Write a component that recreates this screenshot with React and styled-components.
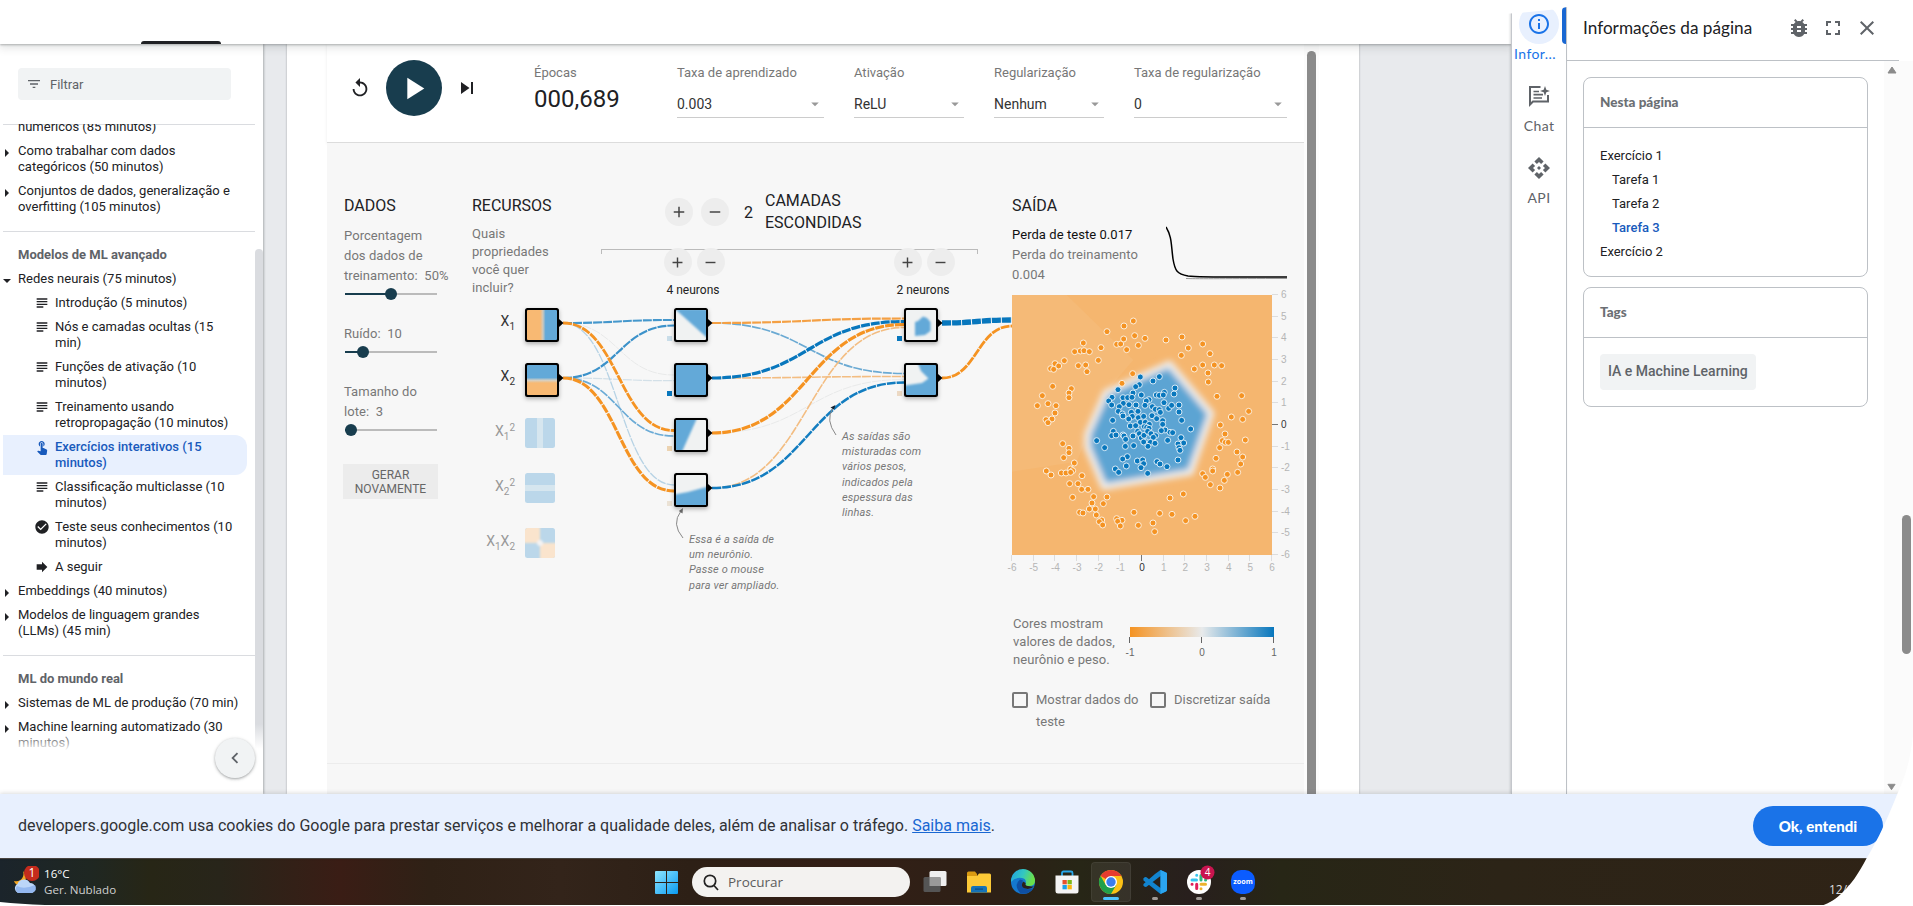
import React from 'react';
import styled, { createGlobalStyle } from 'styled-components';
import {
  MdApi, MdArrowDropDown, MdBugReport, MdCheckCircle, MdChevronLeft, MdClose, MdFilterList,
  MdForward, MdFullscreen, MdInfoOutline, MdPlayArrow, MdReplay, MdSkipNext, MdSubject, MdTouchApp,
  MdAdd, MdRemove,
} from 'react-icons/md';

const Global = createGlobalStyle`
  * { box-sizing: border-box; }
  html, body { margin: 0; background: #fff; overflow: hidden; }
  body { font-family: Roboto, "Liberation Sans", sans-serif; color: #202124; }
  svg { display: block; flex: none; }
`;

const SANS = '"Lato", Roboto, sans-serif';

const Screen = styled.div`
  position: relative;
  width: 1913px;
  height: 906px;
  display: flex;
  flex-direction: column;
  overflow: hidden;
  background: #fff;
`;
const Upper = styled.div`
  height: 794px;
  display: flex;
`;
const Site = styled.div`
  width: 1511px;
  display: flex;
  flex-direction: column;
`;
const TopBar = styled.header`
  height: 44px;
  flex: none;
  padding-left: 141px;
  display: flex;
  align-items: flex-end;
  background: #fff;
  box-shadow: 0 1px 2px rgba(60, 64, 67, 0.35), 0 3px 8px 1px rgba(60, 64, 67, 0.15);
  z-index: 2;
`;
const ActiveTab = styled.div`
  width: 80px;
  height: 3px;
  border-radius: 3px 3px 0 0;
  background: #202124;
`;
const Body = styled.div`
  flex: 1;
  min-height: 0;
  display: flex;
  background: #e8eaed;
`;

/* ---- Course navigation ---- */
const Sidebar = styled.nav`
  position: relative;
  width: 263px;
  height: 750px;
  background: #fff;
  display: flex;
  flex-direction: column;
  box-shadow: 1px 0 2px rgba(60, 64, 67, 0.35);
`;
const FilterBox = styled.div`
  margin: 24px 0 24px 18px;
  width: 213px;
  height: 32px;
  flex: none;
  border-radius: 4px;
  background: #f1f3f4;
  color: #5f6368;
  display: flex;
  align-items: center;
  gap: 8px;
  padding: 0 8px;
  font-size: 13px;
`;
const NavScroll = styled.div`
  position: relative;
  margin-left: 3px;
  height: 627px;
  overflow: hidden;
  width: 260px;
  &::after {
    content: '';
    position: absolute;
    left: 0;
    right: 0;
    bottom: 0;
    height: 20px;
    background: linear-gradient(rgba(255, 255, 255, 0), #fff);
  }
`;
const NavSection = styled.div`
  width: 252px;
  border-top: 1px solid #dadce0;
  padding: ${(p) => (p.$first ? '0 0 12px' : '7px 0 12px')};
`;
const NavLift = styled.div`
  margin-top: -10px;
`;
const NavHeading = styled.div`
  margin: 8px 0 4px 15px;
  font-size: 13px;
  line-height: 16px;
  font-weight: 700;
  color: #5f6368;
`;
const NavItem = styled.a`
  display: flex;
  font-size: 13px;
  line-height: 16px;
  padding: 4px 0;
  color: ${(p) => (p.$on ? '#185abc' : '#202124')};
  font-weight: ${(p) => (p.$on ? 500 : 400)};
  background: ${(p) => (p.$on ? '#e8f0fe' : 'transparent')};
  width: ${(p) => (p.$on ? '244px' : 'auto')};
  border-radius: 0 12px 12px 0;
  white-space: pre-line;
`;
const Marker = styled.span`
  width: ${(p) => (p.$sub ? '52px' : '15px')};
  flex: none;
  padding-left: ${(p) => (p.$sub ? '31px' : '0')};
  svg { margin-top: ${(p) => (p.$sub ? '0' : '4px')}; }
`;
const NavThumb = styled.div`
  position: absolute;
  right: 0;
  top: 205px;
  width: 8px;
  height: 500px;
  border-radius: 4px 4px 0 0;
  background: linear-gradient(#dadce0 95%, rgba(218, 220, 224, 0));
`;
const Collapse = styled.button`
  position: absolute;
  left: 215px;
  top: 694px;
  width: 40px;
  height: 40px;
  padding: 0;
  border: 0;
  border-radius: 50%;
  background: #f1f3f4;
  color: #5f6368;
  display: grid;
  place-items: center;
  box-shadow: 0 1px 2px rgba(60, 64, 67, 0.3), 0 1px 3px 1px rgba(60, 64, 67, 0.15);
`;

/* ---- Article and playground ---- */
const Article = styled.main`
  width: 1072px;
  margin-left: 24px;
  padding-left: 40px;
  background: #fff;
  display: flex;
  box-shadow: 0 0 2px rgba(60, 64, 67, 0.4);
`;
const Playground = styled.section`
  width: 977px;
  display: flex;
  flex-direction: column;
`;
const FrameScroll = styled.div`
  width: 15px;
  padding: 7px 3px 0;
  background: #fcfcfc;
`;
const FrameThumb = styled.div`
  width: 9px;
  height: 100%;
  border-radius: 5px 5px 0 0;
  background: #8b8b8b;
`;
const Controls = styled.div`
  height: 99px;
  flex: none;
  display: flex;
  align-items: flex-start;
  background: #fff;
  border-bottom: 1px solid #dcdcdc;
  box-shadow: 0 1px 3px rgba(0, 0, 0, 0.08);
`;
const PlayGroup = styled.div`
  width: 207px;
  flex: none;
  height: 88px;
  padding-left: 22px;
  display: flex;
  align-items: center;
  color: #202124;
`;
const PlayButton = styled.div`
  width: 56px;
  height: 56px;
  margin: 0 13px 0 15px;
  padding-right: 2px;
  border-radius: 50%;
  background: #183d4e;
  color: #fff;
  display: grid;
  place-items: center;
`;
const Epochs = styled.div`
  width: 143px;
  flex: none;
  padding-top: 19px;
`;
const Label = styled.div`
  font-size: 13px;
  line-height: 20px;
  color: #777;
  white-space: nowrap;
`;
const EpochValue = styled.div`
  font-size: 24px;
  line-height: 30px;
  margin-top: 1px;
  color: #202124;
`;
const Field = styled.div`
  width: ${(p) => p.$w}px;
  flex: none;
  margin-right: 30px;
  padding-top: 19px;
  &:last-child { margin-right: 0; }
`;
const Select = styled.div`
  display: flex;
  justify-content: space-between;
  align-items: center;
  height: 28px;
  margin-top: 7px;
  padding-bottom: 0;
  border-bottom: 1px solid #ccc;
  font-size: 14px;
  color: #333;
  svg { color: #999; }
`;
const Model = styled.div`
  flex: 1;
  min-height: 0;
  background: #f7f7f7;
`;
const Columns = styled.div`
  height: 621px;
  padding: 53px 0 0 17px;
  display: grid;
  grid-template-columns: 128px 540px 292px;
  border-bottom: 1px solid #ececec;
`;
const Heading = styled.h4`
  margin: 0;
  font-size: 16px;
  line-height: ${(p) => p.$lh || 20}px;
  font-weight: 400;
  color: #202124;
`;
const Para = styled.div`
  font-size: 13px;
  line-height: ${(p) => p.$lh || 20}px;
  margin-top: ${(p) => p.$mt || 0}px;
  letter-spacing: 0.06px;
  color: ${(p) => (p.$dark ? '#111' : '#777')};
  white-space: pre;
`;
const Track = styled.div`
  position: relative;
  width: 92px;
  height: 2px;
  margin: ${(p) => p.$mt}px 0 5px 1px;
  background: linear-gradient(90deg, #183d4e ${(p) => p.$at}px, #bbb ${(p) => p.$at}px);
`;
const Knob = styled.div`
  position: absolute;
  top: -5px;
  left: ${(p) => p.$at - 6}px;
  width: 12px;
  height: 12px;
  border-radius: 50%;
  background: #183d4e;
`;
const Regenerate = styled.button`
  margin: 28px 0 0 -1px;
  width: 95px;
  height: 35px;
  padding: 0;
  border: 0;
  background: #ececec;
  color: #666;
  font: 12px/14px Roboto, sans-serif;
`;
const NetHead = styled.div`
  display: flex;
  height: 104px;
`;
const Features = styled.div`
  width: 129px;
`;
const Hidden = styled.div`
  width: 377px;
`;
const LayerRow = styled.div`
  height: 53px;
  padding: 0 0 21px 64px;
  display: flex;
  align-items: center;
  gap: 8px;
`;
const Round = styled.span`
  width: 28px;
  height: 28px;
  flex: none;
  border-radius: 50%;
  background: #ededed;
  color: #444;
  display: grid;
  place-items: center;
`;
const Count = styled.span`
  width: 20px;
  margin-left: 7px;
  margin-right: -7px;
  font-size: 16px;
`;
const Bracket = styled.div`
  height: 5px;
  border: 1px solid #bbb;
  border-bottom: 0;
`;
const NeuronRow = styled.div`
  display: flex;
  gap: 130px;
  margin-top: -6px;
  padding-left: 43px;
`;
const NeuronGroup = styled.div`
  width: 100px;
  display: flex;
  flex-wrap: wrap;
  justify-content: center;
  column-gap: 5px;
  font-size: 12px;
  line-height: 20px;
  color: #222;
`;
const NeuronCount = styled.div`
  width: 100%;
  margin: 4px 2px 0 0;
  text-align: center;
`;
const Diagram = styled.div`
  position: relative;
  width: 540px;
  height: 300px;
`;
const Note = styled.div`
  position: absolute;
  left: ${(p) => p.$x}px;
  top: ${(p) => p.$y}px;
  font-size: 11px;
  line-height: 15.2px;
  font-style: italic;
  letter-spacing: 0.15px;
  color: #777;
  white-space: pre;
`;
const LossRow = styled.div`
  display: flex;
  margin-top: 9px;
  height: 63px;
`;
const LossText = styled.div`
  width: 154px;
`;
const LegendRow = styled.div`
  display: flex;
  align-items: flex-start;
  margin-top: 37px;
  svg { margin: 12px 0 0 0; }
`;
const LegendText = styled.div`
  width: 113px;
  padding-left: 1px;
`;
const Checks = styled.div`
  display: flex;
  margin-top: 20px;
`;
const Check = styled.label`
  width: 138px;
  display: flex;
  gap: 8px;
  font-size: 13px;
  line-height: 22px;
  color: #777;
  white-space: pre;
`;
const Box = styled.span`
  width: 16px;
  height: 16px;
  margin-top: 3px;
  flex: none;
  border: 2px solid #777;
  border-radius: 2px;
`;

/* ---- Right rail and info panel ---- */
const Rail = styled.aside`
  width: 56px;
  border-left: 1px solid #c4c7cc;
  border-right: 1px solid #bdc1c6;
  background: #fff;
  display: flex;
  flex-direction: column;
  align-items: center;
  position: relative;
  font-family: ${SANS};
  font-size: 14px;
  color: #5f6368;
  box-shadow: -1px 0 2px rgba(60, 64, 67, 0.2);
  z-index: 3;
`;
const RailIcon = styled.div`
  width: 40px;
  height: 40px;
  display: grid;
  place-items: center;
  border-radius: 50%;
  margin-top: ${(p) => p.$mt}px;
  background: ${(p) => (p.$on ? '#e8f0fe' : 'transparent')};
  color: ${(p) => (p.$on ? '#1a73e8' : '#5f6368')};
  clip-path: ${(p) => (p.$on ? 'polygon(0 9px, 100% 5px, 100% 100%, 0 100%)' : 'none')};
`;
const RailText = styled.div`
  line-height: 20px;
  color: ${(p) => (p.$on ? '#1a73e8' : '#5f6368')};
  letter-spacing: 0.4px;
  margin-right: ${(p) => (p.$on ? 8 : 0)}px;
`;
const RailBar = styled.div`
  position: absolute;
  right: 0;
  top: 7px;
  width: 4px;
  height: 37px;
  border-radius: 4px 0 0 4px;
  background: #1967d2;
`;
const Panel = styled.aside`
  width: 346px;
  display: flex;
  flex-direction: column;
`;
const PanelHead = styled.div`
  height: 61px;
  width: 332px;
  padding: 0 20px 5px 16px;
  display: flex;
  align-items: center;
  border-bottom: 1px solid #bdc1c6;
  color: #5f6368;
`;
const PanelTitle = styled.h2`
  margin: 0 auto 0 0;
  font: 400 17.2px/24px ${SANS};
  color: #202124;
`;
const Tool = styled.span`
  margin-left: 10px;
`;
const PanelBody = styled.div`
  flex: 1;
  display: flex;
`;
const Cards = styled.div`
  width: 317px;
  padding: 16px 16px 0;
  display: flex;
  flex-direction: column;
  gap: 10px;
`;
const Card = styled.section`
  height: ${(p) => p.$h}px;
  width: 285px;
  border: 1px solid #bdc1c6;
  border-radius: 8px;
`;
const CardTitle = styled.h3`
  margin: 0;
  height: 50px;
  padding-left: 16px;
  border-bottom: 1px solid #bdc1c6;
  font: 900 13.5px/49px ${SANS};
  color: #6b6f74;
`;
const TocItem = styled.a`
  display: block;
  padding-left: ${(p) => (p.$sub ? 28 : 16)}px;
  font-size: 13px;
  line-height: 24px;
  color: ${(p) => (p.$on ? '#185abc' : '#202124')};
  font-weight: ${(p) => (p.$on ? 500 : 400)};
  &:first-of-type { margin-top: 16px; }
`;
const Chip = styled.span`
  display: inline-block;
  margin: 16px;
  padding: 0 8px;
  height: 36px;
  border-radius: 4px;
  background: #f1f3f4;
  color: #5f6368;
  font-size: 14px;
  font-weight: 500;
  line-height: 35px;
`;
const PageScroll = styled.div`
  width: 29px;
  background: #fbfbfb;
  padding: 5px 3px 3px;
  display: flex;
  flex-direction: column;
`;
const PageThumb = styled.div`
  width: 9px;
  height: 139px;
  margin: 441px 0 auto 15px;
  border-radius: 5px;
  background: #8b8b8b;
`;

/* ---- Cookie notice and taskbar ---- */
const CookieBar = styled.div`
  height: 64px;
  padding: 0 30px 1px 18px;
  display: flex;
  align-items: center;
  justify-content: space-between;
  background: #e8f0fe;
  font-size: 16px;
  color: #303236;
  box-shadow: 0 -1px 4px rgba(60, 64, 67, 0.18);
  z-index: 4;
  a { color: #1967d2; text-decoration: underline; }
`;
const Accept = styled.button`
  width: 130px;
  height: 40px;
  border: 0;
  border-radius: 20px;
  background: #1a73e8;
  color: #fff;
  font: 900 15px/20px ${SANS};
`;
const Taskbar = styled.footer`
  position: relative;
  height: 47px;
  display: flex;
  align-items: flex-start;
  font-family: "Open Sans", sans-serif;
  border-top: 1px solid #4a4440;
  background: linear-gradient(90deg, #1b242b 0, #1f2722 90px, #272616 150px, #28251a 220px, #3a1d15 340px, #2f2116 430px, #33241a 560px, #2d2016 690px, #331f16 840px, #2d2016 1000px, #272616 1080px, #281f1d 1190px, #272616 1280px, #2c2417 1500px, #2f2316 1913px);
`;
const Weather = styled.div`
  width: 655px;
  padding: 7px 0 0 12px;
  display: flex;
  gap: 5px;
  font-size: 11.6px;
  line-height: 16px;
  color: #fff;
  small { display: block; font-size: 11.6px; color: #cfcfcf; }
`;
const WinIcon = styled.div`
  padding-top: 12px;
  width: 37px;
`;
const Search = styled.div`
  width: 218px;
  height: 30px;
  margin-top: 8px;
  border-radius: 15px;
  background: #f3f2f0;
  color: #5c5c5c;
  display: flex;
  align-items: center;
  gap: 9px;
  padding-left: 11px;
  font-size: 13.5px;
`;
const Apps = styled.div`
  display: flex;
  padding: 3px 0 0 5px;
  gap: 4px;
`;
const AppTile = styled.div`
  width: 40px;
  height: 40px;
  border-radius: 4px;
  padding: 8px 8px 0 7px;
  display: flex;
  flex-direction: column;
  align-items: center;
  gap: 3px;
  background: ${(p) => (p.$on ? 'rgba(255,255,255,0.07)' : 'transparent')};
  box-shadow: ${(p) => (p.$on ? 'inset 0 0 0 1px rgba(255,255,255,0.06)' : 'none')};
  svg { overflow: visible; }
  &::after {
    content: '';
    width: ${(p) => (p.$on ? 16 : p.$run ? 6 : 0)}px;
    height: 3px;
    border-radius: 2px;
    background: ${(p) => (p.$on ? '#4cc2ff' : '#a09a96')};
  }
`;
const DateText = styled.div`
  position: absolute;
  left: 1829px;
  top: 23px;
  font-size: 12px;
  line-height: 16px;
  color: #ddd;
`;
const Cutout = styled.svg`
  position: absolute;
  left: 0;
  top: 0;
  pointer-events: none;
  z-index: 6;
`;

const ORANGE = '#f59322';
const BLUE = '#0877bd';
const LO = '#f8b973';
const LB = '#63a9d8';
const LW = '#f0f2f2';

const ORANGE_PTS = [[400,123],[372,138],[321,155],[404,167],[435,175],[371,177],[350,193],[362,192],[415,196],[380,209],[498,180],[546,171],[608,192],[565,204],[544,226],[630,221],[608,255],[583,267],[643,255],[665,257],[624,279],[625,306],[250,189],[303,203],[224,215],[241,213],[252,212],[268,215],[193,242],[295,241],[165,251],[176,258],[152,266],[161,268],[235,257],[257,255],[261,275],[398,281],[366,310],[158,319],[214,326],[207,339],[207,353],[127,347],[112,377],[144,371],[168,377],[165,399],[138,419],[156,417],[144,428],[651,349],[725,347],[746,394],[694,411],[728,418],[661,435],[675,462],[736,480],[667,482],[676,487],[685,487],[659,503],[711,516],[728,531],[648,535],[722,552],[638,567],[638,573],[713,577],[682,583],[608,581],[616,592],[673,601],[631,614],[660,624],[188,491],[207,505],[207,518],[191,533],[223,549],[139,573],[153,585],[184,579],[198,579],[212,567],[218,572],[212,577],[246,587],[209,611],[234,611],[245,628],[264,628],[218,652],[281,650],[321,651],[276,669],[310,671],[268,687],[286,687],[239,697],[249,699],[289,705],[305,720],[298,725],[308,735],[402,697],[350,716],[366,721],[353,724],[361,738],[415,736],[479,700],[516,703],[585,709],[557,722],[459,729],[464,755],[510,654],[550,642]];
const BLUE_PTS = [[421,291],[478,290],[459,303],[418,314],[407,320],[354,329],[525,324],[493,337],[522,342],[424,345],[469,345],[478,346],[399,339],[490,345],[336,352],[326,363],[369,353],[383,353],[396,352],[447,359],[439,363],[335,375],[370,370],[387,374],[358,380],[355,394],[408,375],[435,376],[492,368],[506,385],[515,376],[537,375],[537,396],[457,380],[466,388],[478,389],[481,397],[367,402],[369,408],[394,397],[414,394],[397,409],[386,417],[338,421],[415,413],[431,409],[456,407],[470,416],[488,422],[488,433],[545,421],[572,447],[421,427],[436,427],[391,438],[407,437],[448,433],[433,440],[440,442],[447,445],[495,450],[484,452],[510,457],[518,458],[340,454],[335,467],[348,465],[369,465],[372,468],[377,478],[399,468],[413,454],[418,461],[424,474],[432,466],[443,454],[453,461],[467,467],[460,472],[437,485],[431,486],[451,487],[465,490],[444,499],[503,481],[543,473],[551,489],[534,492],[537,503],[540,511],[290,482],[314,503],[376,499],[401,497],[382,530],[368,537],[412,543],[428,540],[431,551],[379,558],[423,563],[471,545],[480,552],[501,560],[534,540],[346,567],[356,577],[443,580]];

const HeatSvg = styled.svg`
  overflow: visible;
`;

const Heat = () => {
  const ticks = [-6, -5, -4, -3, -2, -1, 0, 1, 2, 3, 4, 5, 6];
  return (
    <HeatSvg width="292" height="290" viewBox="0 -7 292 290" fontFamily="Liberation Sans, sans-serif" fontSize="10">
      <defs>
        <filter id="soft" x="-20%" y="-20%" width="140%" height="140%"><feGaussianBlur stdDeviation="9" /></filter>
        <clipPath id="plot"><rect width="260" height="260" /></clipPath>
      </defs>
      <g clipPath="url(#plot)">
        <rect width="260" height="260" fill="#f5b66f" />
        <g transform="scale(0.33333) translate(-36 -45)">
          <path d="M36 45H200L400 240L318 335L230 545L36 575Z" fill="#f5ba77" />
          <path d="M508 252L633 400L571 577L312 620L262 500L263 462L318 338Z" fill="#5ca4d3" stroke="#eeeceb" strokeWidth="20" strokeLinejoin="round" filter="url(#soft)" />
          {ORANGE_PTS.map(([x, y], i) => <circle key={i} cx={x} cy={y} r="9" fill={ORANGE} stroke="#fbeedd" strokeWidth="3" />)}
          {BLUE_PTS.map(([x, y], i) => <circle key={i} cx={x} cy={y} r="9" fill={BLUE} stroke="#d9eaf5" strokeWidth="3" />)}
        </g>
      </g>
      {ticks.map((t) => {
        const p = (t + 6) * 21.667;
        const line = t === 0 ? '#777' : '#ddd';
        const ink = t === 0 ? '#333' : '#b5b5b5';
        const x = Math.round(p) - 0.5;
        const y = Math.round(260 - p) - 0.5;
        return (
          <g key={t}>
            <path d={`M${x} 260v6`} stroke={line} />
            <text x={p} y="276" textAnchor="middle" fill={ink}>{t}</text>
            <path d={`M260 ${y}h6`} stroke={line} />
            <text x="269" y={263 - p} fill={ink}>{t}</text>
          </g>
        );
      })}
    </HeatSvg>
  );
};

/* Link: [x0, y0, x1, y1, colour, width] in diagram space */
const LINKS = [
  [91, 23, 202, 75, '#e6e8e8', 0.9], [91, 78, 202, 80.7, '#d3e0e8', 1.2],
  [91, 23, 202, 185, '#b7d3e5', 1.3], [91, 23, 202, 20, '#4497cc', 2.1],
  [91, 78, 202, 25.5, '#3c92ca', 2.2], [91, 78, 202, 136, '#6babd6', 1.7],
  [91, 23, 202, 130.5, ORANGE, 2.8], [91, 78, 202, 191, ORANGE, 3.1],
  [240, 133, 432, 79.5, '#e6e8e8', 0.9], [240, 23, 432, 73.5, '#6baad3', 1.7],
  [240, 78, 432, 76.5, '#f3bd82', 1.6], [240, 188, 432, 27.5, '#f3bd82', 1.6],
  [240, 23, 432, 18.5, '#f4a044', 2.2], [240, 78, 432, 21.5, BLUE, 3.2],
  [240, 133, 432, 24.5, ORANGE, 3.2], [240, 188, 432, 82.5, '#137dc0', 2.5],
  [470, 23, 540, 20, BLUE, 5.3], [470, 78, 540, 26, ORANGE, 2.8],
];

const Node = ({ x, y, bg, children, off, blur = true }) => (
  <g transform={`translate(${x} ${y})`} opacity={off ? 0.4 : 1}>
    {!off && <path d="M34 11L38.5 15L34 19Z" fill="#000" />}
    {!off && <rect x="0" y="0" width="34" height="34" rx="2.5" fill="#000" filter="url(#drop)" />}
    <g transform={off ? 'translate(-2 -2)' : undefined} clipPath={off ? 'url(#roundTile)' : 'url(#tile)'}>
      <rect x="2" y="2" width="30" height="30" fill={bg} />
      <g filter={blur ? 'url(#fuzz)' : undefined}>{children}</g>
    </g>
  </g>
);

const FeatureLabel = ({ y, a, b, sup, off }) => (
  <text x="43" y={y} textAnchor="end" fontSize="14" fill={off ? '#999' : '#333'}>
    X<tspan fontSize="10" dy="4">{a}</tspan>
    {sup && <tspan fontSize="10" dy="-9">2</tspan>}
    {b && <tspan fontSize="14" dy="-4">X</tspan>}
    {b && <tspan fontSize="10" dy="4">{b}</tspan>}
  </text>
);

const Network = () => (
  <svg width="540" height="300" viewBox="0 0 540 300" fontFamily="Roboto, sans-serif">
    <defs>
      <filter id="fuzz" x="-20%" y="-20%" width="140%" height="140%"><feGaussianBlur stdDeviation="0.9" /></filter>
      <filter id="drop" x="-30%" y="-30%" width="170%" height="170%"><feDropShadow dx="0" dy="2" stdDeviation="2" floodOpacity="0.3" /></filter>
      <clipPath id="tile"><rect x="2" y="2" width="30" height="30" rx="1" /></clipPath>
      <clipPath id="roundTile"><rect x="2" y="2" width="30" height="30" rx="2.5" /></clipPath>
      <linearGradient id="vx"><stop offset="0.44" stopColor={LO} /><stop offset="0.53" stopColor="#cfc9bd" /><stop offset="0.62" stopColor={LB} /></linearGradient>
      <linearGradient id="vy" x2="0" y2="1"><stop offset="0.42" stopColor={LB} /><stop offset="0.51" stopColor="#d6d0c4" /><stop offset="0.6" stopColor={LO} /></linearGradient>
    </defs>
    <g fill="none" strokeDasharray="9 1">
      {LINKS.map(([x0, y0, x1, y1, c, w], i) => {
        const m = (x0 + x1) / 2;
        return <path key={i} d={`M${x0} ${y0}C${m} ${y0} ${m} ${y1} ${x1} ${y1}`} stroke={c} strokeWidth={w} />;
      })}
    </g>
    <FeatureLabel y={26} a="1" />
    <FeatureLabel y={81} a="2" />
    <FeatureLabel y={136} a="1" sup off />
    <FeatureLabel y={191} a="2" sup off />
    <FeatureLabel y={246} a="1" b="2" off />
    <Node x={53} y={8} bg="url(#vx)" />
    <Node x={53} y={63} bg="url(#vy)" />
    <Node x={53} y={118} bg={LB} off blur={false}><rect x="14" y="2" width="6" height="30" fill="#a7cde4" /></Node>
    <Node x={53} y={173} bg={LB} off blur={false}><rect x="2" y="14" width="30" height="6" fill="#a7cde4" /></Node>
    <Node x={53} y={228} bg={LB} off>
      <rect x="-2" y="-2" width="19" height="19" fill="#ffc98f" /><rect x="17" y="17" width="20" height="20" fill="#ffc98f" />
      <circle cx="17" cy="17" r="3" fill="#eee" />
    </Node>
    <rect x="195" y="36" width="5" height="5" fill="#c9dde9" />
    <rect x="195" y="91" width="5" height="5" fill={BLUE} />
    <rect x="195" y="146" width="5" height="5" fill="#ecd3b1" />
    <rect x="195" y="201" width="5" height="5" fill="#ebe2d5" />
    <rect x="425" y="36" width="5" height="5" fill={BLUE} />
    <rect x="425" y="91" width="5" height="5" fill="#ecd9c4" />
    <Node x={202} y={8} bg={LW}><path d="M1 1H40V36Z" fill={LB} /></Node>
    <Node x={202} y={63} bg={LB} />
    <Node x={202} y={118} bg={LW}><path d="M-2 -2H24L7 36H-2Z" fill={LB} /></Node>
    <Node x={202} y={173} bg={LW}><path d="M-2 22L14 19L36 13V36H-2Z" fill={LB} /></Node>
    <Node x={432} y={8} bg={LW}><path d="M11 14L14 13L19 8.500L23 10L26.500 14V23L21 27L11 28Z" fill={LB} /></Node>
    <Node x={432} y={63} bg={LB}><path d="M-2 -2H13L17 8L24.500 15.500L18 20L-2 23Z" fill={LW} /></Node>
    <g fill="none" stroke="#888">
      <path d="M211 238Q199 224 209 211" />
      <path d="M364 135Q353 120 361 108" />
    </g>
    <path d="M211 208L210.500 213.500L206.800 211Z" fill="#666" />
    <path d="M363.500 105L362 109.500L358.500 107.500Z" fill="#123" />
  </svg>
);

const NAV = [
  { items: [
    { t: 'numéricos (85 minutos)' },
    { m: 'r', t: 'Como trabalhar com dados\ncategóricos (50 minutos)' },
    { m: 'r', t: 'Conjuntos de dados, generalização e\noverfitting (105 minutos)' },
  ] },
  { h: 'Modelos de ML avançado', items: [
    { m: 'd', t: 'Redes neurais (75 minutos)' },
    { s: MdSubject, t: 'Introdução (5 minutos)' },
    { s: MdSubject, t: 'Nós e camadas ocultas (15\nmin)' },
    { s: MdSubject, t: 'Funções de ativação (10\nminutos)' },
    { s: MdSubject, t: 'Treinamento usando\nretropropagação (10 minutos)' },
    { s: MdTouchApp, t: 'Exercícios interativos (15\nminutos)', on: true },
    { s: MdSubject, t: 'Classificação multiclasse (10\nminutos)' },
    { s: MdCheckCircle, t: 'Teste seus conhecimentos (10\nminutos)' },
    { s: MdForward, t: 'A seguir' },
    { m: 'r', t: 'Embeddings (40 minutos)' },
    { m: 'r', t: 'Modelos de linguagem grandes\n(LLMs) (45 min)' },
  ] },
  { h: 'ML do mundo real', items: [
    { m: 'r', t: 'Sistemas de ML de produção (70 min)' },
    { m: 'r', t: 'Machine learning automatizado (30\nminutos)' },
  ] },
];

const Arrow = ({ down }) => (
  <svg width="8" height="10" viewBox="0 0 8 10"><path d={down ? 'M0 4H8L4 8Z' : 'M2 2L6 6L2 10Z'} fill="#202124" /></svg>
);

const NavList = () => (
  <NavScroll>
    {NAV.map((sec, i) => (
      <NavSection key={i} $first={i === 0}>
        {i === 0 && <NavLift />}
        {sec.h && <NavHeading>{sec.h}</NavHeading>}
        {sec.items.map((it) => (
          <NavItem key={it.t} $on={it.on}>
            <Marker $sub={!!it.s}>{it.s ? <it.s size={16} /> : it.m ? <Arrow down={it.m === 'd'} /> : null}</Marker>
            {it.t}
          </NavItem>
        ))}
      </NavSection>
    ))}
  </NavScroll>
);

const Slider = ({ at, mt }) => <Track $at={at} $mt={mt}><Knob $at={at} /></Track>;

const SelectField = ({ label, value, w }) => (
  <Field $w={w}>
    <Label>{label}</Label>
    <Select>{value}<MdArrowDropDown size={18} /></Select>
  </Field>
);

const Neurons = ({ n }) => (
  <NeuronGroup>
    <Round><MdAdd size={17} /></Round>
    <Round><MdRemove size={17} /></Round>
    <NeuronCount>{n} neurons</NeuronCount>
  </NeuronGroup>
);

const ChatSpark = () => (
  <svg width="24" height="24" viewBox="0 0 24 24" fill="none" stroke="#5f6368" strokeWidth="2">
    <path d="M13.500 3H3V20.500L6 17.500H21V11" />
    <path d="M6.500 7.500H12M6.500 10.700H16M6.500 14H15" strokeWidth="1.700" />
    <path d="M18 2L19.300 5.700L23 7L19.300 8.300L18 12L16.700 8.300L13 7L16.700 5.700Z" fill="#5f6368" stroke="none" />
  </svg>
);

const WeatherIcon = () => (
  <svg width="27" height="30" viewBox="0 0 27 30">
    <path d="M11 5C13 10 9 17 2 15C3 19 8 21 12 18C15 14 14 8 11 5Z" fill="#f6a821" />
    <path d="M6 27A5 5 0 0 1 5.500 18A7 7 0 0 1 18 17A5.200 5.200 0 0 1 20 27Z" fill="#bcd6f8" />
    <path d="M6 27A4.500 4.500 0 0 1 5 20Q12 24 23 19Q26 24 20 27Z" fill="#94b8ef" />
    <circle cx="20" cy="7" r="8" fill="#c42b1c" />
    <text x="20" y="11.300" textAnchor="middle" fontSize="12" fill="#fff" fontFamily="Open Sans, sans-serif">1</text>
  </svg>
);
const Windows = () => (
  <svg width="23" height="23" viewBox="0 0 23 23">
    <defs><linearGradient id="w" x2="1" y2="1"><stop stopColor="#8fe6ff" /><stop offset="1" stopColor="#0a9bf2" /></linearGradient></defs>
    <path d="M0 1Q0 0 1 0H11V11H0ZM12 0H22Q23 0 23 1V11H12ZM0 12H11V23H1Q0 23 0 22ZM12 12H23V22Q23 23 22 23H12Z" fill="url(#w)" />
  </svg>
);
const Magnifier = () => (
  <svg width="16" height="17" viewBox="0 0 16 17" fill="none" stroke="#222" strokeWidth="1.700">
    <circle cx="7" cy="7" r="5.700" /><path d="M11 11.500L15 16" />
  </svg>
);
const TaskView = () => (
  <svg width="24" height="24" viewBox="0 0 24 24">
    <rect x="6.500" y="1" width="17" height="15" rx="1.500" fill="#efefef" />
    <rect x="0.500" y="7" width="17" height="15" rx="1.500" fill="#555" />
    <rect x="6.500" y="7" width="11" height="9" fill="#9a9a9a" />
  </svg>
);
const Explorer = () => (
  <svg width="24" height="24" viewBox="0 0 24 24">
    <path d="M0 3Q0 1.500 1.500 1.500H8L10 4V8H0Z" fill="#d99a12" />
    <path d="M0 6H10L12 3.500H22.500Q24 3.500 24 5V22.500H0Z" fill="#fcc937" />
    <path d="M4 22.500V18Q4 16 6 16H18Q20 16 20 18V22.500Z" fill="#1573b8" />
    <rect x="8" y="18.500" width="8" height="1.200" fill="#0b4c83" />
  </svg>
);
const Edge = () => (
  <svg width="24" height="24" viewBox="0 0 24 24">
    <defs><linearGradient id="e" x2="1" y2="0.300"><stop stopColor="#1ea0e6" /><stop offset="0.550" stopColor="#33c7c0" /><stop offset="1" stopColor="#6be04a" /></linearGradient></defs>
    <circle cx="12" cy="12" r="12" fill="#1478cf" />
    <path d="M0 11A12 12 0 0 1 24 11Q24 16 18 16Q14 16 14.500 14Q16 9 11 8Q4 7 0 12Z" fill="url(#e)" />
    <path d="M9 9.500Q2 15 9.500 23.500Q18 25 22.500 18Q15 21 12 17Q10 14 12 10.500Z" fill="#0f4fa3" />
    <path d="M12 11.500Q9 17 14 18.500Q19 20 23 16.500Q20 16.500 17 16Q13.500 15.500 14.700 13Z" fill="#2a2018" />
  </svg>
);
const Store = () => (
  <svg width="24" height="24" viewBox="0 0 24 24">
    <path d="M7 6V3Q7 1.500 8.500 1.500H16Q17.500 1.500 17.500 3V6" fill="none" stroke="#28a8ea" strokeWidth="1.800" />
    <path d="M0.500 5.500H23.500V21Q23.500 23.500 21 23.500H3Q0.500 23.500 0.500 21Z" fill="#f4f4f4" />
    <rect x="7.500" y="10" width="4.300" height="4.300" fill="#e9502b" /><rect x="12.500" y="10" width="4.300" height="4.300" fill="#7cb815" />
    <rect x="7.500" y="15" width="4.300" height="4.300" fill="#1ba0e8" /><rect x="12.500" y="15" width="4.300" height="4.300" fill="#fbb60d" />
  </svg>
);
const Chrome = () => (
  <svg width="24" height="24" viewBox="0 0 24 24">
    <circle cx="12" cy="12" r="12" fill="#fbc116" />
    <path d="M12 12L1.600 6A12 12 0 0 1 22.400 6H12Z" fill="#e63b2e" />
    <path d="M1.600 6A12 12 0 0 0 12 24L17.200 15H12L6.800 15Z" fill="#21a04a" />
    <circle cx="12" cy="12" r="6" fill="#fff" /><circle cx="12" cy="12" r="4.700" fill="#3b7ded" />
  </svg>
);
const VsCode = () => (
  <svg width="24" height="24" viewBox="0 0 24 24">
    <path d="M17.500 0L23 2.600Q24 3 24 4V20Q24 21 23 21.400L17.500 24L3 12.500L0.500 10.500L0.300 8.500L2 7L3.500 7.200L17.500 18V6L3.500 16.800L2 17L0.300 15.500L0.500 14L12 4Z" fill="#1284cf" />
    <path d="M17.500 0L23 2.600Q24 3 24 4V20Q24 21 23 21.400L17.500 24Z" fill="#2ba5f0" />
  </svg>
);
const Slack = () => (
  <svg width="24" height="24" viewBox="0 0 24 24">
    <circle cx="12" cy="12" r="12" fill="#fff" />
    <g strokeWidth="3" strokeLinecap="round">
      <path d="M5 10H9.500M9.700 5.200V5.300" stroke="#36c5f0" /><path d="M14 5.500V10M18.500 10H18.600" stroke="#2eb67d" />
      <path d="M14 14.200H18.500M14 18.700V18.800" stroke="#ecb22e" /><path d="M9.700 14.200V18.500M5 14.200H5.100" stroke="#e01e5a" />
    </g>
    <circle cx="20.500" cy="2.500" r="7" fill="#c9144f" />
    <text x="20.500" y="6.200" fontSize="10" textAnchor="middle" fill="#fff">4</text>
  </svg>
);
const Zoom = () => (
  <svg width="24" height="24" viewBox="0 0 24 24">
    <rect width="24" height="24" rx="10" fill="#0b5cff" />
    <text x="12" y="14.200" fontSize="7.200" fontWeight="700" textAnchor="middle" fill="#fff">zoom</text>
  </svg>
);

export default function App() {
  return (
    <Screen>
      <Global />
      <Upper>
        <Site>
          <TopBar><ActiveTab /></TopBar>
          <Body>
            <Sidebar>
              <FilterBox><MdFilterList size={16} />Filtrar</FilterBox>
              <NavList />
              <NavThumb />
              <Collapse><MdChevronLeft size={22} /></Collapse>
            </Sidebar>
            <Article>
              <Playground>
                <Controls>
                  <PlayGroup>
                    <MdReplay size={22} />
                    <PlayButton><MdPlayArrow size={37} /></PlayButton>
                    <MdSkipNext size={24} />
                  </PlayGroup>
                  <Epochs><Label>Épocas</Label><EpochValue>000,689</EpochValue></Epochs>
                  <SelectField label="Taxa de aprendizado" value="0.003" w={147} />
                  <SelectField label="Ativação" value="ReLU" w={110} />
                  <SelectField label="Regularização" value="Nenhum" w={110} />
                  <SelectField label="Taxa de regularização" value="0" w={153} />
                </Controls>
                <Model>
                  <Columns>
                    <div>
                      <Heading>DADOS</Heading>
                      <Para $mt={10}>{'Porcentagem\ndos dados de\ntreinamento:  50%'}</Para>
                      <Slider at={46} mt={7} />
                      <Para $mt={29}>Ruído:  10</Para>
                      <Slider at={18} mt={7} />
                      <Para $mt={29}>{'Tamanho do\nlote:  3'}</Para>
                      <Slider at={6} mt={7} />
                      <Regenerate>GERAR<br />NOVAMENTE</Regenerate>
                    </div>
                    <div>
                      <NetHead>
                        <Features>
                          <Heading>RECURSOS</Heading>
                          <Para $lh={18} $mt={9}>{'Quais\npropriedades\nvocê quer\nincluir?'}</Para>
                        </Features>
                        <Hidden>
                          <LayerRow>
                            <Round><MdAdd size={18} /></Round>
                            <Round><MdRemove size={18} /></Round>
                            <Count>2</Count>
                            <Heading $lh={22}>CAMADAS<br />ESCONDIDAS</Heading>
                          </LayerRow>
                          <Bracket />
                          <NeuronRow><Neurons n={4} /><Neurons n={2} /></NeuronRow>
                        </Hidden>
                      </NetHead>
                      <Diagram>
                        <Network />
                        <Note $x={217} $y={232}>{'Essa é a saída de\num neurônio.\nPasse o mouse\npara ver ampliado.'}</Note>
                        <Note $x={370} $y={129}>{'As saídas são\nmisturadas com\nvários pesos,\nindicados pela\nespessura das\nlinhas.'}</Note>
                      </Diagram>
                    </div>
                    <div>
                      <Heading>SAÍDA</Heading>
                      <LossRow>
                        <LossText>
                          <Para $dark>Perda de teste 0.017</Para>
                          <Para>{'Perda do treinamento\n0.004'}</Para>
                        </LossText>
                        <svg width="121" height="60" viewBox="0 0 121 60" fill="none">
                          <path d="M20 53.500C35 54 60 53.500 121 53.500" stroke="#999" />
                          <path d="M0 2C6 12 5 19 7 34C9 46 11 49 22 51C35 52.500 60 52 121 52" stroke="#000" strokeWidth="1.500" />
                        </svg>
                      </LossRow>
                      <Heat />
                      <LegendRow>
                        <LegendText><Para $lh={18}>{'Cores mostram\nvalores de dados,\nneurônio e peso.'}</Para></LegendText>
                        <svg width="160" height="34" viewBox="-5 0 160 34" fontSize="10" fill="#666" fontFamily="Liberation Sans, sans-serif">
                          <defs><linearGradient id="scale"><stop stopColor={ORANGE} /><stop offset="0.5" stopColor="#e8eaeb" /><stop offset="1" stopColor={BLUE} /></linearGradient></defs>
                          <rect width="144" height="10" fill="url(#scale)" />
                          <path d="M-0.500 10v6M71.500 10v6M143.500 10v6" stroke="#666" />
                          <g textAnchor="middle"><text y="29">-1</text><text x="72" y="29">0</text><text x="144" y="29">1</text></g>
                        </svg>
                      </LegendRow>
                      <Checks>
                        <Check><Box />{'Mostrar dados do\nteste'}</Check>
                        <Check><Box />Discretizar saída</Check>
                      </Checks>
                    </div>
                  </Columns>
                </Model>
              </Playground>
              <FrameScroll><FrameThumb /></FrameScroll>
            </Article>
          </Body>
        </Site>
        <Rail>
          <RailBar />
          <RailIcon $on $mt={4}><MdInfoOutline size={24} /></RailIcon>
          <RailText $on>Infor...</RailText>
          <RailIcon $mt={12}><ChatSpark /></RailIcon>
          <RailText>Chat</RailText>
          <RailIcon $mt={12}><MdApi size={24} /></RailIcon>
          <RailText>API</RailText>
        </Rail>
        <Panel>
          <PanelHead>
            <PanelTitle>Informações da página</PanelTitle>
            <Tool><MdBugReport size={24} /></Tool>
            <Tool><MdFullscreen size={24} /></Tool>
            <Tool><MdClose size={24} /></Tool>
          </PanelHead>
          <PanelBody>
            <Cards>
              <Card $h={200}>
                <CardTitle>Nesta página</CardTitle>
                <TocItem>Exercício 1</TocItem>
                <TocItem $sub>Tarefa 1</TocItem>
                <TocItem $sub>Tarefa 2</TocItem>
                <TocItem $sub $on>Tarefa 3</TocItem>
                <TocItem>Exercício 2</TocItem>
              </Card>
              <Card $h={120}>
                <CardTitle>Tags</CardTitle>
                <Chip>IA e Machine Learning</Chip>
              </Card>
            </Cards>
            <PageScroll>
              <svg width="10" height="8" viewBox="0 0 10 8"><path d="M5 1L9 7H1Z" fill="#8b8b8b" stroke="#8b8b8b" strokeLinejoin="round" /></svg>
              <PageThumb />
              <svg width="9" height="8" viewBox="0 0 10 8"><path d="M5 7L9 1H1Z" fill="#8b8b8b" stroke="#8b8b8b" strokeLinejoin="round" /></svg>
            </PageScroll>
          </PanelBody>
        </Panel>
      </Upper>
      <CookieBar>
        <span>developers.google.com usa cookies do Google para prestar serviços e melhorar a qualidade deles, além de analisar o tráfego. <a>Saiba mais</a>.</span>
        <Accept>Ok, entendi</Accept>
      </CookieBar>
      <Taskbar>
        <Weather><WeatherIcon /><div>16°C<small>Ger. Nublado</small></div></Weather>
        <WinIcon><Windows /></WinIcon>
        <Search><Magnifier />Procurar</Search>
        <Apps>
          <AppTile><TaskView /></AppTile>
          <AppTile><Explorer /></AppTile>
          <AppTile><Edge /></AppTile>
          <AppTile><Store /></AppTile>
          <AppTile $on><Chrome /></AppTile>
          <AppTile $run><VsCode /></AppTile>
          <AppTile $run><Slack /></AppTile>
          <AppTile $run><Zoom /></AppTile>
        </Apps>
        <DateText>12/05</DateText>
      </Taskbar>
      <Cutout width="1913" height="906" viewBox="0 0 1913 906">
        <path d="M1913 735C1910 765 1903 781 1897.300 794C1889 815 1878 840 1866.700 858C1858 875 1851 884 1843 892C1836 899 1830 903 1821 906H1913Z" fill="#fff" />
        <path d="M0 902Q20 904 45 905V906H0Z" fill="#fff" />
        <path d="M1506 0H1568V7L1506 14Z" fill="#fff" />
      </Cutout>
    </Screen>
  );
}
